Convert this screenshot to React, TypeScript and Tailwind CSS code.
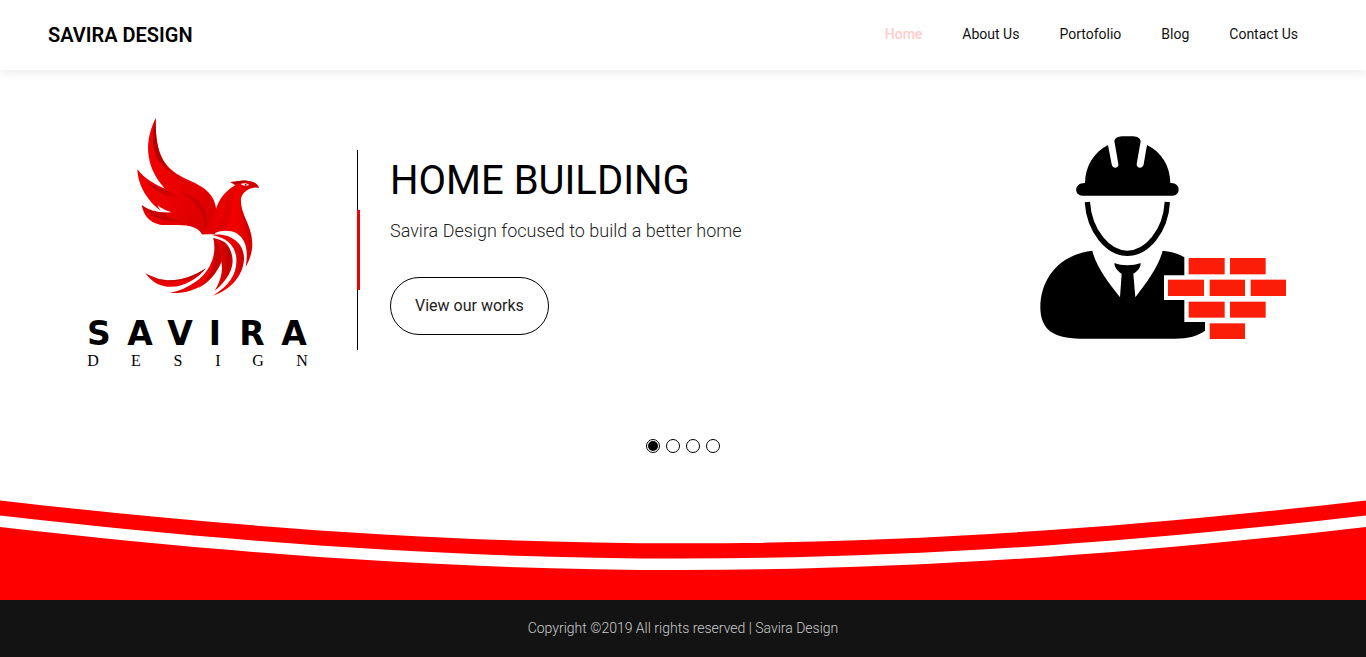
import React, { useState } from 'react';

const links = ['Home', 'About Us', 'Portofolio', 'Blog', 'Contact Us'];

const slides = ['Home building', 'Interior', 'Renovation', 'Consultation'];

function Logo() {
  return (
    <svg viewBox="0 0 240 265" className="w-60 shrink-0" role="img" aria-label="Savira Design logo">
      <defs>
        <linearGradient id="wing" x1="0" y1="0" x2="1" y2="1">
          <stop offset="0" stopColor="#f80000" />
          <stop offset="0.5" stopColor="#ec0000" />
          <stop offset="1" stopColor="#d80000" />
        </linearGradient>
        <linearGradient id="shade" x1="0" y1="0" x2="1" y2="1">
          <stop offset="0" stopColor="#a00000" />
          <stop offset="1" stopColor="#e00000" />
        </linearGradient>
        <linearGradient id="body" x1="0" y1="0" x2="1" y2="0">
          <stop offset="0" stopColor="#e00000" />
          <stop offset="0.6" stopColor="#f20000" />
          <stop offset="1" stopColor="#c80000" />
        </linearGradient>
      </defs>
      <g transform="translate(40 0) scale(0.3333)">
        {/* wing */}
        <path
          fill="url(#wing)"
          d="M107 24 C74 90 72 168 135 236 C105 224 72 205 52 178 C54 235 92 282 126 305 C102 304 82 298 65 285 C72 318 88 337 120 344 C160 349 225 335 246 373 L285 373 L289 300 C284 250 250 230 205 210 C135 178 105 140 107 24 Z"
        />
        <path fill="url(#shade)" d="M107 24 C98 60 95 100 108 138 C125 178 170 200 215 226 C170 210 150 195 190 206 C135 178 105 140 107 24 Z" />
        <path fill="url(#shade)" d="M52 178 C65 205 90 228 135 238 C150 246 160 250 175 262 C140 262 100 250 52 178 Z" />
        <path fill="#b80000" opacity="0.7" d="M65 285 C85 304 115 310 155 307 C120 316 150 330 190 334 C130 336 80 322 65 285 Z" />
        <path fill="#b00000" opacity="0.5" d="M180 246 C240 262 280 305 252 368 C262 320 235 275 180 246 Z" />
        <path fill="#fff" d="M65 285 C85 300 115 309 155 307 C140 302 125 296 112 286 L122 303 C102 303 82 297 65 285 Z" />
        {/* head and body */}
        <path
          fill="url(#body)"
          d="M287 300 C296 270 314 244 346 226 L331 216 C350 216 370 208 386 213 C398 214 413 219 417 234 C402 228 370 238 363 265 C360 315 398 345 397 405 C396 430 388 452 377 471 C385 425 380 390 350 370 C325 358 300 362 280 371 L246 373 C262 345 280 325 287 300 Z"
        />
        <path fill="#c40000" opacity="0.6" d="M362 268 C352 325 395 350 390 425 C402 375 382 345 370 315 C362 295 362 285 362 268 Z" />
        <path fill="#c40000" opacity="0.3" d="M352 228 C330 250 342 290 330 330 C320 350 300 360 280 371 C310 340 316 300 316 270 C320 250 335 235 352 228 Z" />
        <path fill="#b00000" d="M331 216 C350 216 370 208 386 213 C376 216 356 222 344 222 Z" />
        <path fill="#fff" d="M362 222 C372 218 382 220 388 225 C379 229 370 228 362 222 Z" />
        <circle cx="377" cy="224" r="3" fill="#c00000" />
        {/* tail */}
        <path fill="url(#body)" d="M277 375 C330 366 375 400 372 450 C368 500 330 540 279 557 C330 525 352 490 349 445 C346 405 318 383 277 375 Z" />
        <path fill="url(#body)" d="M280 384 C320 390 338 420 338 455 C336 490 310 520 284 543 C304 510 309 480 304 455 C285 505 235 553 149 549 C205 537 250 505 268 470 C284 440 287 410 280 384 Z" />
        <path fill="#b80000" opacity="0.6" d="M280 384 C300 400 304 430 304 455 C290 490 265 520 235 535 C270 500 295 450 280 384 Z" />
        <path fill="#b80000" opacity="0.6" d="M280 384 C320 400 330 440 312 500 C330 470 345 420 315 396 Z" />
        <path fill="url(#body)" d="M76 489 C125 520 190 520 258 475 C215 530 125 560 76 489 Z" />
        <path fill="#a80000" opacity="0.6" d="M76 489 C125 520 190 520 258 475 C215 518 130 530 76 489 Z" />
      </g>
      <g fill="#000" textAnchor="middle">
        <text x="19 60 100 135 172 214" y="235" fontFamily="'DejaVu Sans', sans-serif" fontWeight="700" fontSize="33">
          SAVIRA
        </text>
        <text x="13 56 98 138 178 222" y="256" fontFamily="'Liberation Serif', serif" fontSize="16">
          DESIGN
        </text>
      </g>
    </svg>
  );
}

function Builder() {
  return (
    <svg viewBox="0 0 810 675" className="w-[270px] shrink-0" role="img" aria-label="Builder with bricks">
      {/* helmet */}
      <path d="M165 174 C166 122 192 82 234 60 L245 118 C247 133 267 131 265 117 L253 48 C256 38 264 35 275 34 L310 34 C322 35 330 39 332 49 L320 117 C319 131 339 132 341 118 L351 60 C395 82 420 122 421 174 C454 172 453 212 427 212 L157 212 C131 210 132 173 165 174 Z" />
      {/* face */}
      <path d="M172 231 C178 320 235 385 292 385 C350 385 407 320 412 231" fill="none" stroke="#000" strokeWidth="16" />
      {/* suit */}
      <path d="M187 377 C90 388 30 460 31 550 C33 615 70 640 150 641 L435 641 C475 641 505 632 525 617 L525 591 L463 591 L463 525 L402 525 L402 451 L463 451 L463 397 C445 386 422 379 398 377 C386 425 350 472 316 517 L310 446 C324 438 332 428 332 414 C308 423 276 423 253 414 C254 428 262 438 275 446 L270 517 C235 472 198 425 187 377 Z" />
      <g fill="#fb1d08">
        <rect x="476" y="399" width="108" height="49" />
        <rect x="600" y="399" width="107" height="49" />
        <rect x="414" y="464" width="108" height="49" />
        <rect x="539" y="464" width="106" height="49" />
        <rect x="662" y="464" width="106" height="49" />
        <rect x="476" y="530" width="108" height="48" />
        <rect x="600" y="530" width="107" height="48" />
        <rect x="539" y="595" width="106" height="47" />
      </g>
    </svg>
  );
}

function Waves() {
  return (
    <svg viewBox="0 0 1366 100" preserveAspectRatio="none" className="block h-25 w-full" fill="#ff0000" aria-hidden="true">
      <path d="M0 0.5 C500 57.6 866 57.6 1366 0.5 V15.5 C866 72.8 500 72.8 0 15.5 Z" />
      <path d="M0 27 C500 84.3 866 84.3 1366 27 V100 H0 Z" />
    </svg>
  );
}

export default function App() {
  const [current, setCurrent] = useState(0);

  return (
    <div className="flex min-h-screen flex-col bg-white font-['Roboto',sans-serif] text-black">
      <header className="flex h-[70px] items-center justify-between px-12 shadow-[0_0_12px_rgba(0,0,0,0.12)]">
        <a href="#" className="text-xl font-semibold">
          SAVIRA DESIGN
        </a>
        <nav className="flex pb-0.5 text-sm">
          {links.map((link, i) => (
            <a key={link} href="#" className={i === 0 ? 'px-5 font-medium text-[#ffcccc]' : 'px-5 text-[#111]'}>
              {link}
            </a>
          ))}
        </nav>
      </header>

      <main className="flex grow flex-col">
        <section className="flex items-start pt-10 pr-[66px] pl-20">
          <Logo />
          <div className="mt-10 ml-[37px] flex h-[200px] items-center border-l border-black">
            <div className="-ml-px h-20 w-[3px] bg-[#ee0000]" />
          </div>
          <div className="mt-[41px] ml-[30px] grow">
            <h1 className="text-[40px] leading-[60px] font-normal">HOME BUILDING</h1>
            <p className="mt-1.5 text-lg font-light text-[#222]">Savira Design focused to build a better home</p>
            <button type="button" className="mt-8 h-[58px] rounded-full border border-black px-6 text-base text-[#222]">
              View our works
            </button>
          </div>
          <div className="mt-[15px]">
            <Builder />
          </div>
        </section>

        <div className="mt-16 flex justify-center gap-1.5">
          {slides.map((slide, i) => (
            <button
              key={slide}
              type="button"
              aria-label={slide}
              onClick={() => setCurrent(i)}
              className="flex size-3.5 items-center justify-center rounded-full border border-black"
            >
              {i === current && <span className="size-2.5 rounded-full bg-black" />}
            </button>
          ))}
        </div>

        <div className="mt-auto">
          <Waves />
        </div>
      </main>

      <footer className="flex h-[57px] items-center justify-center bg-[#131313] pb-0.5 text-sm font-light text-[#ccc]">
        Copyright ©2019 All rights reserved | Savira Design
      </footer>
    </div>
  );
}
